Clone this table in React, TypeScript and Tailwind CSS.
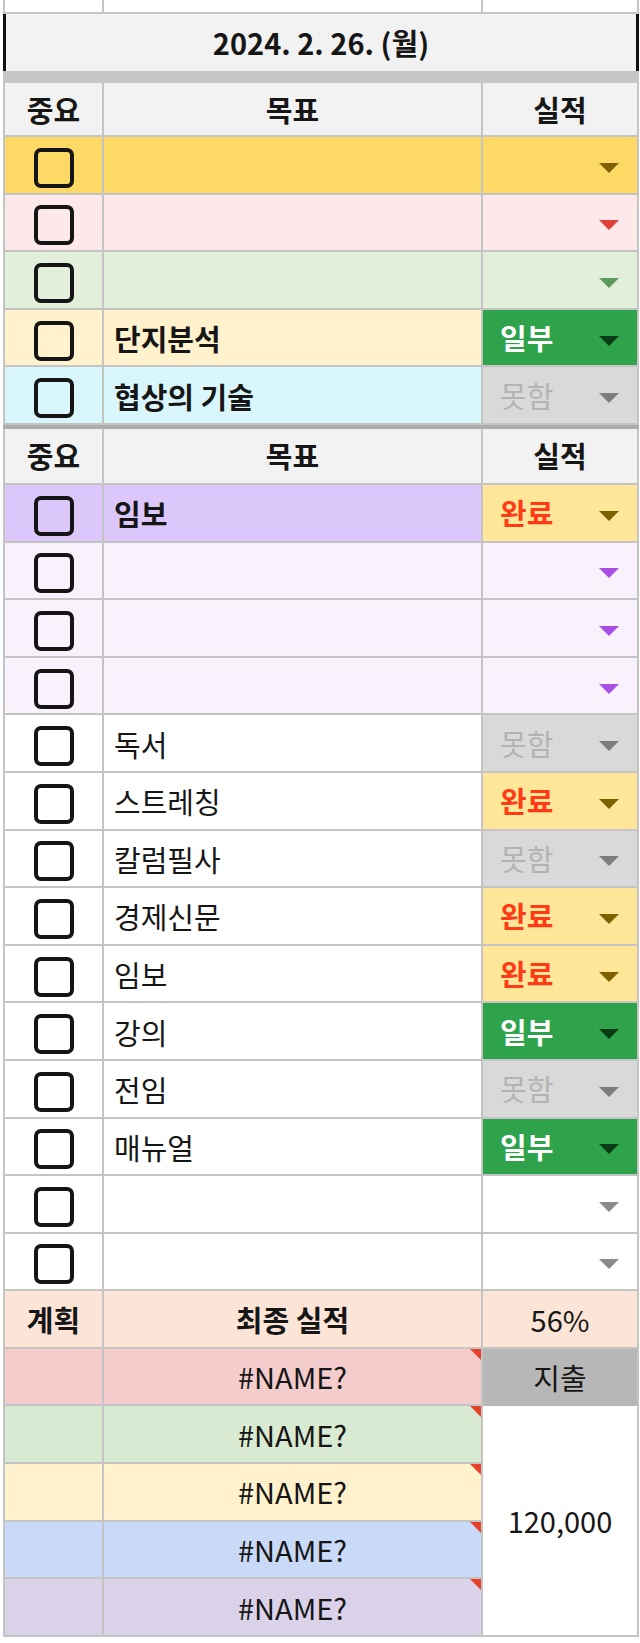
type Status = '완료' | '일부' | '못함' | ''

type Row = {
  goal: string
  bold?: boolean
  bg: string
  status: Status
  statusBg: string
  arrow: string
}

const FONT = { fontFamily: '"Noto Sans CJK KR", "Noto Sans", sans-serif' }

const GOLD = '#7f6000'
const DARK_GREEN = '#0b3b14'
const GRAY = '#7c7c7c'
const PURPLE = '#a94fe6'

const topRows: Row[] = [
  { goal: '', bg: 'bg-[#ffd966]', status: '', statusBg: 'bg-[#ffd966]', arrow: GOLD },
  { goal: '', bg: 'bg-[#fde9ea]', status: '', statusBg: 'bg-[#fde9ea]', arrow: '#e0403a' },
  { goal: '', bg: 'bg-[#e2efda]', status: '', statusBg: 'bg-[#e2efda]', arrow: '#5c9a5c' },
  { goal: '단지분석', bold: true, bg: 'bg-[#fff2cc]', status: '일부', statusBg: 'bg-[#2ea34b]', arrow: DARK_GREEN },
  { goal: '협상의 기술', bold: true, bg: 'bg-[#daf6fd]', status: '못함', statusBg: 'bg-[#d9d9d9]', arrow: GRAY },
]

const done = { status: '완료' as Status, statusBg: 'bg-[#ffe699]', arrow: GOLD }
const part = { status: '일부' as Status, statusBg: 'bg-[#2ea34b]', arrow: DARK_GREEN }
const miss = { status: '못함' as Status, statusBg: 'bg-[#d9d9d9]', arrow: GRAY }
const lav = { goal: '', bg: 'bg-[#f9f2fc]', status: '' as Status, statusBg: 'bg-[#f9f2fc]', arrow: PURPLE }
const empty = { goal: '', bg: 'bg-white', status: '' as Status, statusBg: 'bg-white', arrow: '#8a8a8a' }

const mainRows: Row[] = [
  { goal: '임보', bold: true, bg: 'bg-[#dcc7fa]', ...done },
  lav,
  lav,
  lav,
  { goal: '독서', bg: 'bg-white', ...miss },
  { goal: '스트레칭', bg: 'bg-white', ...done },
  { goal: '칼럼필사', bg: 'bg-white', ...miss },
  { goal: '경제신문', bg: 'bg-white', ...done },
  { goal: '임보', bg: 'bg-white', ...done },
  { goal: '강의', bg: 'bg-white', ...part },
  { goal: '전임', bg: 'bg-white', ...miss },
  { goal: '매뉴얼', bg: 'bg-white', ...part },
  empty,
  empty,
]

const nameRows = ['bg-[#f4cccc]', 'bg-[#d9ead3]', 'bg-[#fff2cc]', 'bg-[#c9daf8]', 'bg-[#d9d2e9]']

function Checkbox() {
  return <div className="mt-[6px] h-[40px] w-[40px] rounded-[7px] border-[4px] border-[#151515]" />
}

function Arrow({ color }: { color: string }) {
  return (
    <svg width="20" height="10" viewBox="0 0 20 10" className="mt-[6px] shrink-0">
      <polygon points="0,0 20,0 10,10" fill={color} />
    </svg>
  )
}

function StatusText({ status }: { status: Status }) {
  if (status === '완료') return <span className="font-bold text-[#ff3a17]">완료</span>
  if (status === '일부') return <span className="font-bold text-white">일부</span>
  if (status === '못함') return <span className="text-[#b3b3b3]">못함</span>
  return <span />
}

function HeaderRow({ h }: { h: string }) {
  return (
    <div className={`grid ${h} grid-cols-[99px_379px_154px] border-x-2 border-b-2 border-[#c4c4c4] bg-[#f2f2f2] font-bold`}>
      <div className="flex items-center justify-center border-r-2 border-[#c4c4c4]">중요</div>
      <div className="flex items-center justify-center border-r-2 border-[#c4c4c4]">목표</div>
      <div className="flex items-center justify-center">실적</div>
    </div>
  )
}

function GoalRow({ row }: { row: Row }) {
  return (
    <div className="grid h-[57.6px] grid-cols-[99px_379px_154px] border-x-2 border-b-2 border-[#c4c4c4]">
      <div className={`flex items-center justify-center border-r-2 border-[#c4c4c4] ${row.bg}`}>
        <Checkbox />
      </div>
      <div className={`flex items-center border-r-2 border-[#c4c4c4] pl-[10px] pt-[2px] ${row.bg} ${row.bold ? 'font-bold' : ''}`}>
        {row.goal}
      </div>
      <div className={`flex items-center justify-between pl-[17px] pr-[18px] ${row.statusBg}`}>
        <StatusText status={row.status} />
        <Arrow color={row.arrow} />
      </div>
    </div>
  )
}

function Corner() {
  return (
    <svg width="11" height="11" viewBox="0 0 11 11" className="absolute right-0 top-0">
      <polygon points="0,0 11,0 11,11" fill="#e5412b" />
    </svg>
  )
}

export default function App() {
  return (
    <div className="min-h-[1643px] w-[640px] bg-white text-[29px] leading-none text-[#161616]" style={FONT}>
      <div className="ml-[3px] w-[636px]">
        <div className="grid h-[14px] grid-cols-[99px_379px_154px] border-x-2 border-b-2 border-[#c4c4c4]">
          <div className="border-r-2 border-[#c4c4c4]" />
          <div className="border-r-2 border-[#c4c4c4]" />
          <div />
        </div>

        <div className="flex h-[57px] items-center justify-center border-x-[3px] border-[#111] bg-[#f2f2f2] font-bold">
          2024. 2. 26. (월)
        </div>
        <div className="h-[12px] bg-[#c6c6c6]" />

        <HeaderRow h="h-[54px]" />
        {topRows.map((r, i) => (
          <GoalRow key={i} row={r} />
        ))}
        <div className="h-[4px] bg-[#acacac]" />

        <HeaderRow h="h-[56px]" />
        {mainRows.map((r, i) => (
          <GoalRow key={i} row={r} />
        ))}

        <div className="grid h-[57.6px] grid-cols-[99px_379px_154px] border-x-2 border-b-2 border-[#c4c4c4] bg-[#fce4d6]">
          <div className="flex items-center justify-center border-r-2 border-[#c4c4c4] font-bold">계획</div>
          <div className="flex items-center justify-center border-r-2 border-[#c4c4c4] font-bold">최종 실적</div>
          <div className="flex items-center justify-center">56%</div>
        </div>

        <div className="grid grid-cols-[99px_379px_154px] grid-rows-[repeat(5,57.6px)] border-x-2 border-[#c4c4c4]">
          {nameRows.map((bg, i) => (
            <div key={`a${i}`} className={`col-start-1 border-b-2 border-r-2 border-[#c4c4c4] ${bg}`} style={{ gridRow: i + 1 }} />
          ))}
          {nameRows.map((bg, i) => (
            <div
              key={`b${i}`}
              className={`relative col-start-2 flex items-center justify-center border-b-2 border-r-2 border-[#c4c4c4] ${bg}`}
              style={{ gridRow: i + 1 }}
            >
              #NAME?
              <Corner />
            </div>
          ))}
          <div className="col-start-3 row-start-1 flex items-center justify-center bg-[#b7b7b7]">지출</div>
          <div className="col-start-3 row-span-4 row-start-2 flex items-center justify-center border-b-2 border-[#c4c4c4] bg-white">
            120,000
          </div>
        </div>
      </div>
    </div>
  )
}
